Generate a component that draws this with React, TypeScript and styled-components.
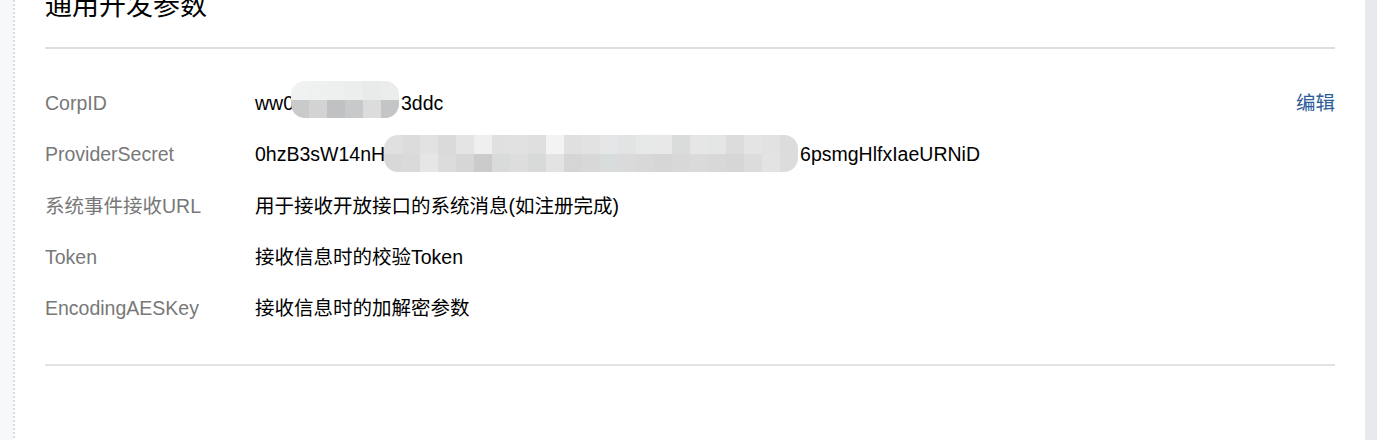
import styled, { createGlobalStyle } from 'styled-components'

const GlobalStyle = createGlobalStyle`
  html, body {
    margin: 0;
    padding: 0;
    background: #ffffff;
  }
  body {
    font-family: "Liberation Sans", "Noto Sans CJK SC", sans-serif;
    font-size: 19.5px;
    color: #000000;
  }
`

const Page = styled.div`
  display: flex;
  min-height: 100vh;
  overflow: hidden;
`

const Gutter = styled.div`
  width: 13px;
  flex: none;
  background: #f7f8fa;
`

const DottedRule = styled.div`
  width: 2px;
  flex: none;
  background-image: repeating-linear-gradient(
    to bottom,
    #d9dadd 0,
    #d9dadd 2px,
    transparent 2px,
    transparent 4px
  );
`

const Panel = styled.main`
  flex: 1;
  padding: 0 30px;
  background: #ffffff;
`

const ScrollStrip = styled.div`
  width: 12px;
  flex: none;
  background: #e8e9ec;
`

const SectionTitle = styled.h2`
  margin: -7px 0 0;
  padding-bottom: 27px;
  border-bottom: 2px solid #dcdee1;
  font-size: 27px;
  line-height: 27px;
  font-weight: normal;
  color: #000000;
`

const ParamList = styled.dl`
  margin: 0;
  padding: 29px 0 30px;
  border-bottom: 2px solid #e2e3e6;
`

const ParamRow = styled.div`
  display: grid;
  grid-template-columns: 210px 1fr auto;
  height: 51.25px;
  line-height: 51px;
  white-space: nowrap;
`

const Label = styled.dt`
  margin: 0;
  color: #787878;
`

const Value = styled.dd`
  margin: 0;
  color: #000000;
`

const EditLink = styled.a`
  color: #2d5c99;
  text-decoration: none;
  cursor: pointer;
`

const Mosaic = styled.span<{ $drop: number; $shiftLeft?: number; $gapRight?: number }>`
  display: inline-block;
  overflow: hidden;
  border-radius: 14px;
  vertical-align: ${(p) => -p.$drop}px;
  margin-left: ${(p) => -(p.$shiftLeft ?? 0)}px;
  margin-right: ${(p) => p.$gapRight ?? 0}px;
`

const MosaicGrid = styled.span<{ $cols: number }>`
  display: grid;
  grid-template-columns: repeat(${(p) => p.$cols}, 18px);
  grid-auto-rows: 18.5px;
`

const Cell = styled.span`
  display: block;
`

type MosaicProps = {
  rows: string[][]
  drop: number
  shiftLeft?: number
  gapRight?: number
}

function Blur({ rows, drop, shiftLeft, gapRight }: MosaicProps) {
  return (
    <Mosaic $drop={drop} $shiftLeft={shiftLeft} $gapRight={gapRight}>
      <MosaicGrid $cols={rows[0].length}>
        {rows.flat().map((c, i) => (
          <Cell key={i} style={{ background: c }} />
        ))}
      </MosaicGrid>
    </Mosaic>
  )
}

const corpIdBlur = [
  ['#f0f1f1', '#eff0f0', '#eef0f0', '#eceded', '#e9eaea', '#ebecec'],
  ['#c9caca', '#d3d3d3', '#c0c1c2', '#c8c9ca', '#dcdcdc', '#c4c5c6'],
]

const secretBlur = [
  [
    '#e0e0e0', '#dcdcdc', '#e2e2e2', '#dadada', '#e4e4e4', '#efefef', '#e0e0e0', '#e1e1e1',
    '#dedede', '#f3f3f3', '#e0e0e0', '#e2e2e2', '#e4e6e7', '#e2e3e3', '#e6e7e7', '#e8e8e8',
    '#dadcdc', '#e6e6e6', '#e4e5e5', '#dcdcdc', '#e4e4e4', '#e2e2e2', '#dcdcdc',
  ],
  [
    '#d8d8d8', '#dadada', '#e6e6e6', '#dcdcdc', '#d6d6d6', '#cbcbcb', '#d9dada', '#dddddd',
    '#d8d9d9', '#e3e3e3', '#d5d5d5', '#d8d8d8', '#d8dcdd', '#dadada', '#d8d8d8', '#d6d6d6',
    '#d8d8d8', '#dadada', '#d8d8d8', '#d6d6d6', '#dcdcdc', '#e3e3e3', '#dcdcdc',
  ],
]

function App() {
  return (
    <>
      <GlobalStyle />
      <Page>
        <Gutter />
        <DottedRule />
        <Panel>
          <SectionTitle>通用开发参数</SectionTitle>
          <ParamList>
            <ParamRow>
              <Label>CorpID</Label>
              <Value>
                ww0
                <Blur rows={corpIdBlur} drop={8} shiftLeft={3} gapRight={2} />
                3ddc
              </Value>
              <EditLink>编辑</EditLink>
            </ParamRow>
            <ParamRow>
              <Label>ProviderSecret</Label>
              <Value>
                0hzB3sW14nH
                <Blur rows={secretBlur} drop={11} shiftLeft={1} gapRight={2} />
                6psmgHlfxIaeURNiD
              </Value>
            </ParamRow>
            <ParamRow>
              <Label>系统事件接收URL</Label>
              <Value>用于接收开放接口的系统消息(如注册完成)</Value>
            </ParamRow>
            <ParamRow>
              <Label>Token</Label>
              <Value>接收信息时的校验Token</Value>
            </ParamRow>
            <ParamRow>
              <Label>EncodingAESKey</Label>
              <Value>接收信息时的加解密参数</Value>
            </ParamRow>
          </ParamList>
        </Panel>
        <ScrollStrip />
      </Page>
    </>
  )
}

export default App
